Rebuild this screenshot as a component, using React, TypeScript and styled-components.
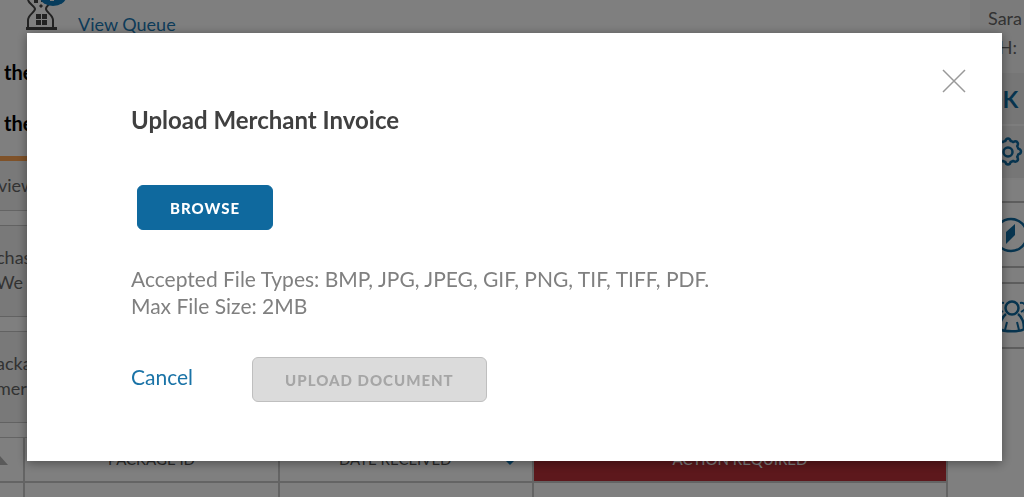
import React from "react";
import styled, { createGlobalStyle } from "styled-components";

const GlobalStyle = createGlobalStyle`
  * { box-sizing: border-box; }
  html, body { margin: 0; background: #fff; }
  body { font-family: Lato, "Liberation Sans", sans-serif; color: #666; overflow: hidden; }
`;

const Page = styled.div`
  display: flex;
  align-items: flex-start;
  gap: 22px;
  height: 100vh;
  overflow: hidden;
  background: #fff;
`;

const Main = styled.main`
  flex: 1;
  min-width: 0;
`;

const QueueBar = styled.header`
  display: flex;
  align-items: flex-end;
  gap: 12px;
  height: 36px;
  padding: 0 0 0 26px;
  svg { display: block; margin-bottom: 5px; }
`;

const QueueLink = styled.a`
  font-size: 18px;
  line-height: 24px;
  color: #1c78b4;
  text-decoration: none;
`;

const Steps = styled.div`
  display: flex;
  flex-direction: column;
  gap: 27px;
  padding: 24px 4px 21px;
  border-bottom: 5px solid #ffa552;
`;

const Step = styled.strong`
  font-size: 20px;
  line-height: 24px;
  color: #000;
`;

const Tab = styled.div`
  height: 50px;
  margin-left: -2px;
  padding: 12px 0;
  font-size: 18px;
  line-height: 24px;
  background: #f2f2f2;
  border-bottom: 1px solid #c8c8c8;
`;

const Card = styled.section`
  height: 92px;
  margin: 14px 0 0 -4px;
  padding: 19px 0;
  font-size: 18px;
  line-height: 25px;
  background: #f2f2f2;
  border: solid #c4c4c4;
  border-width: 1px 0;
  p { margin: 0; }
`;

const Packages = styled.table`
  width: 100%;
  margin-top: 14px;
  border-collapse: collapse;
  table-layout: fixed;
`;

const HeadCell = styled.th<{ $width?: number; $alert?: boolean }>`
  width: ${(p) => (p.$width ? p.$width + "px" : "auto")};
  height: 44px;
  padding: 0;
  font-size: 15px;
  font-weight: 400;
  line-height: 20px;
  color: ${(p) => (p.$alert ? "#fff" : "#555")};
  background: ${(p) => (p.$alert ? "#ba3038" : "#fff")};
  border: 1px solid #c8c8c8;
  border-width: 1px 2px 2px 0;
`;

const HeadInner = styled.span`
  display: flex;
  align-items: center;
  justify-content: space-between;
  padding: 0 17px 0 59px;
  svg { display: block; }
`;

const Cell = styled.td`
  height: 45px;
  border-right: 2px solid #c8c8c8;
`;

const Side = styled.aside`
  width: 54px;
  overflow: hidden;
  white-space: nowrap;
`;

const Profile = styled.div`
  height: 73px;
  padding: 4px 0 0 18px;
  font-size: 18px;
  line-height: 29px;
  background: #f7f7f7;
`;

const Tile = styled.div<{ $height: number; $indent: number }>`
  display: flex;
  align-items: center;
  height: ${(p) => p.$height}px;
  padding-left: ${(p) => p.$indent}px;
  font-size: 23px;
  font-weight: 700;
  color: #0f699e;
  background: #ededed;
  border-bottom: 2px solid #fafafa;
  svg { flex: none; }
`;

const LinkTile = styled(Tile)`
  margin-bottom: 14px;
  background: #fff;
  border: solid #bbb;
  border-width: 2px 0;
`;

const TileGroup = styled.div`
  padding-top: 21px;
`;

const Backdrop = styled.div`
  position: fixed;
  inset: 0;
  padding: 33px 22px 0 27px;
  background: rgba(0, 0, 0, 0.5);
`;

const Dialog = styled.div`
  display: flex;
  flex-direction: column;
  align-items: flex-start;
  padding: 36px 36px 59px 104px;
  background: #fff;
  box-shadow: 0 2px 10px rgba(0, 0, 0, 0.4);
`;

const Close = styled.button`
  align-self: flex-end;
  width: 24px;
  height: 24px;
  padding: 0;
  border: 0;
  background: none;
  svg { display: block; }
`;

const Title = styled.h1`
  margin: 13px 0 0;
  font-size: 24px;
  font-weight: 700;
  line-height: 28px;
  color: #404040;
`;

const Button = styled.button`
  height: 45px;
  padding: 0 32px;
  font: 900 15px/20px Lato, "Liberation Sans", sans-serif;
  letter-spacing: 1px;
  color: #fff;
  background: #0f699e;
  border: 1px solid #0f699e;
  border-radius: 6px;
  &:disabled {
    color: #a6a6a6;
    background: #dbdbdb;
    border-color: #bfbfbf;
  }
`;

const Browse = styled(Button)`
  margin: 51px 0 0 6px;
`;

const Notes = styled.p`
  margin: 35px 0 0;
  font-size: 21px;
  line-height: 27px;
  color: #808080;
`;

const Actions = styled.div`
  display: flex;
  align-items: flex-start;
  gap: 59px;
  margin-top: 38px;
`;

const Cancel = styled.a`
  padding-top: 6px;
  font-size: 21px;
  line-height: 28px;
  color: #1a73a7;
  text-decoration: none;
`;

const Hourglass = () => (
  <svg width="40" height="31" viewBox="0 0 40 31" fill="none">
    <path d="M2 0C3 4 9 6 9 9S2 15 2 20v8M27 28v-8c0-5-7-8-7-11s3-4 4-6" stroke="#444" strokeWidth="2" />
    <path d="M0 27h31v3H0z" fill="#444" />
    <path d="M10 14h5v5h-5zM16 14h5v5h-5zM10 20h5v5h-5zM16 20h5v5h-5zM8 0h4v3H8zM15 4l2 2-2 2-2-2zM15 0h3v2h-3z" fill="#444" />
    <ellipse cx="27" cy="-3" rx="13" ry="9" fill="#0f78b8" />
    <path d="M24 0h4" stroke="#fff" strokeWidth="2" />
  </svg>
);

const Gear = () => (
  <svg width="30" height="30" viewBox="0 0 30 30" fill="none" stroke="#0f699e" strokeWidth="2.5" strokeLinejoin="round">
    <path d="M15 1.5c1.6 0 2.3 1 2.7 2.6 1 .2 1.7.5 2.5 1 1.5-.9 2.9-1.1 4 0s.9 2.500 0 4c.5.8.8 1.500 1 2.500 1.700.4 2.800 1.300 2.800 2.900s-1.100 2.500-2.800 2.900c-.2 1-.5 1.700-1 2.500.9 1.500 1.100 2.900 0 4s-2.500.9-4 0c-.8.5-1.500.8-2.500 1-.4 1.600-1.100 2.600-2.700 2.600s-2.300-1-2.700-2.600c-1-.2-1.700-.5-2.500-1-1.500.9-2.900 1.100-4 0s-.9-2.500 0-4c-.5-.8-.8-1.500-1-2.500-1.700-.4-2.800-1.300-2.800-2.900s1.100-2.500 2.800-2.900c.2-1 .5-1.700 1-2.500-.9-1.500-1.100-2.900 0-4s2.500-.9 4 0c.8-.5 1.500-.8 2.500-1 .4-1.600 1.100-2.600 2.700-2.600z" />
    <circle cx="15" cy="15" r="4.5" />
  </svg>
);

const Compass = () => (
  <svg width="36" height="36" viewBox="0 0 36 36">
    <circle cx="18" cy="18" r="16" fill="none" stroke="#0f699e" strokeWidth="2.5" />
    <path d="M13 15l9-8v11l-9 9z" fill="#0f699e" />
  </svg>
);

const People = () => (
  <svg width="36" height="34" viewBox="0 0 36 34" fill="none" stroke="#0f699e" strokeWidth="2.5">
    <circle cx="18" cy="9" r="6.5" />
    <path d="M12 15c-4 3-6 7-6 15 3 3 21 3 24 0 0-8-2-12-6-15" />
    <path d="M13 23l-2 8M23 23l2 8" strokeWidth="2" />
    <path d="M10 4C5 3 3 8 6 11l3 2M6 13c-3 2-5 5-5 10h4M26 4c5-1 7 4 4 7l-3 2M30 13c3 2 5 5 5 10h-4" strokeWidth="2" />
  </svg>
);

export default function App() {
  return (
    <>
      <GlobalStyle />
      <Page>
        <Main>
          <QueueBar>
            <Hourglass />
            <QueueLink href="#queue">View Queue</QueueLink>
          </QueueBar>
          <Steps>
            <Step>the</Step>
            <Step>the</Step>
          </Steps>
          <Tab>view</Tab>
          <Card>
            <p>chas</p>
            <p>We a</p>
          </Card>
          <Card>
            <p>acka</p>
            <p>mer</p>
          </Card>
          <Packages>
            <thead>
              <tr>
                <HeadCell $width={24}>
                  <svg width="23" height="9" viewBox="0 0 23 9" aria-label="Sort">
                    <path d="M-8 9L0 0l8 9z" fill="#b4b4b4" />
                  </svg>
                </HeadCell>
                <HeadCell $width={255}>PACKAGE ID</HeadCell>
                <HeadCell $width={254}>
                  <HeadInner>
                    DATE RECEIVED
                    <svg width="10" height="12" viewBox="0 0 10 12">
                      <path d="M1 8h8l-4 4z" fill="#0f78b8" />
                    </svg>
                  </HeadInner>
                </HeadCell>
                <HeadCell $alert>ACTION REQUIRED</HeadCell>
              </tr>
            </thead>
            <tbody>
              <tr>
                <Cell />
                <Cell />
                <Cell />
                <Cell />
              </tr>
            </tbody>
          </Packages>
        </Main>
        <Side>
          <Profile>
            Sara
            <br />
            PH:
          </Profile>
          <Tile $height={53} $indent={14}>
            OK
          </Tile>
          <Tile $height={54} $indent={23}>
            <Gear />
          </Tile>
          <TileGroup>
            <LinkTile $height={67} $indent={23}>
              <Compass />
            </LinkTile>
            <LinkTile $height={67} $indent={24}>
              <People />
            </LinkTile>
          </TileGroup>
        </Side>
      </Page>
      <Backdrop>
        <Dialog role="dialog" aria-modal="true" aria-labelledby="upload-title">
          <Close type="button" aria-label="Close">
            <svg width="24" height="24" viewBox="0 0 24 24" stroke="#999" strokeWidth="1.5">
              <path d="M1 1l22 22M23 1L1 23" />
            </svg>
          </Close>
          <Title id="upload-title">Upload Merchant Invoice</Title>
          <Browse type="button">BROWSE</Browse>
          <Notes>
            Accepted File Types: BMP, JPG, JPEG, GIF, PNG, TIF, TIFF, PDF.
            <br />
            Max File Size: 2MB
          </Notes>
          <Actions>
            <Cancel href="#cancel">Cancel</Cancel>
            <Button type="button" disabled>
              UPLOAD DOCUMENT
            </Button>
          </Actions>
        </Dialog>
      </Backdrop>
    </>
  );
}
